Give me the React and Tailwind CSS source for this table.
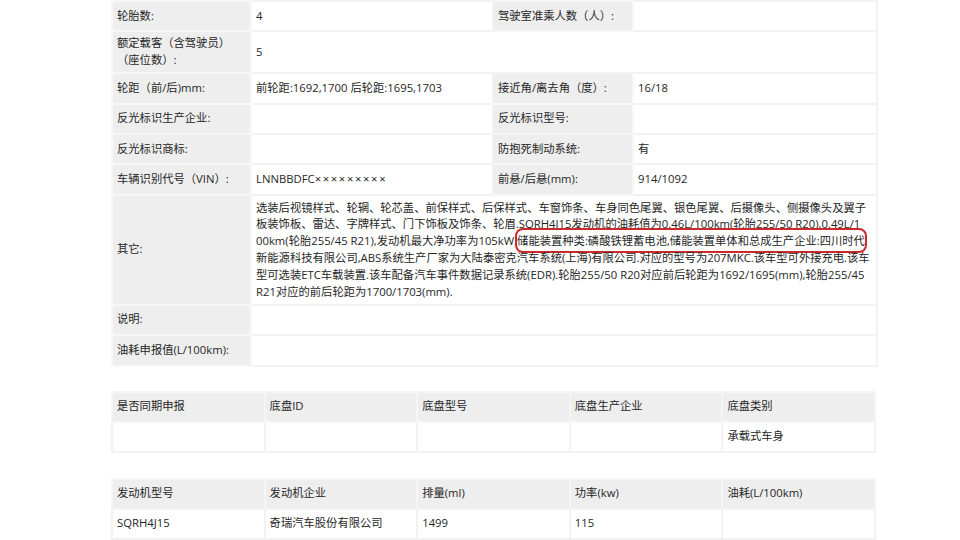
import React from 'react';

const font = { fontFamily: '"Open Sans", "Noto Sans CJK SC", sans-serif' };

const label = 'bg-[#eeeeee] border-2 border-[#f7f7f7] px-[4px] align-middle';
const value = 'bg-white border-2 border-[#f2f2f2] px-[4px] align-middle';

function Row({ h = 'h-[30.5px]', children }) {
  return <tr className={h}>{children}</tr>;
}

const otherLines = [
  '选装后视镜样式、轮辋、轮芯盖、前保样式、后保样式、车窗饰条、车身同色尾翼、银色尾翼、后摄像头、侧摄像头及翼子',
  '板装饰板、雷达、字牌样式、门下饰板及饰条、轮眉.SQRH4J15发动机的油耗值为0.46L/100km(轮胎255/50 R20),0.49L/1',
  null,
  '新能源科技有限公司,ABS系统生产厂家为大陆泰密克汽车系统(上海)有限公司.对应的型号为207MKC.该车型可外接充电.该车',
  '型可选装ETC车载装置.该车配备汽车事件数据记录系统(EDR).轮胎255/50 R20对应前后轮距为1692/1695(mm),轮胎255/45',
  'R21对应的前后轮距为1700/1703(mm).',
];

function SmallTable({ head, body }) {
  return (
    <table className="w-[765px] table-fixed border-collapse">
      <tbody>
        <tr className="h-[30px]">
          {head.map((t, i) => (
            <td key={i} className="bg-[#eeeeee] border-2 border-[#f5f5f5] px-[4px]">{t}</td>
          ))}
        </tr>
        <tr className="h-[30px]">
          {body.map((t, i) => (
            <td key={i} className="bg-white border-2 border-[#f2f2f2] px-[4px]">{t}</td>
          ))}
        </tr>
      </tbody>
    </table>
  );
}

export default function App() {
  return (
    <div className="w-[960px] h-[540px] overflow-hidden bg-white text-[#262626] text-[11.3px] leading-[16.8px]" style={font}>
      <div className="pl-[111px] flex flex-col">
        <table className="w-[765px] table-fixed border-collapse">
          <colgroup>
            <col className="w-[139px]" />
            <col className="w-[242px]" />
            <col className="w-[140px]" />
            <col className="w-[244px]" />
          </colgroup>
          <tbody>
            <Row h="h-[30px]">
              <td className={label}>轮胎数:</td>
              <td className={value}>4</td>
              <td className={label}>驾驶室准乘人数（人）:</td>
              <td className={value}></td>
            </Row>
            <Row h="h-[42px]">
              <td className={label}>额定载客（含驾驶员）<br />（座位数）:</td>
              <td className={value} colSpan={3}>5</td>
            </Row>
            <Row>
              <td className={label}>轮距（前/后)mm:</td>
              <td className={value}>前轮距:1692,1700 后轮距:1695,1703</td>
              <td className={label}>接近角/离去角（度）:</td>
              <td className={value}>16/18</td>
            </Row>
            <Row>
              <td className={label}>反光标识生产企业:</td>
              <td className={value}></td>
              <td className={label}>反光标识型号:</td>
              <td className={value}></td>
            </Row>
            <Row h="h-[30px]">
              <td className={label}>反光标识商标:</td>
              <td className={value}></td>
              <td className={label}>防抱死制动系统:</td>
              <td className={value}>有</td>
            </Row>
            <Row>
              <td className={label}>车辆识别代号（VIN）:</td>
              <td className={value}>
                LNNBBDFC<span className="tracking-[1.6px]">×××××××××</span>
              </td>
              <td className={label}>前悬/后悬(mm):</td>
              <td className={value}>914/1092</td>
            </Row>
            <Row h="h-[110px]">
              <td className={label}>其它:</td>
              <td className={`${value} pt-[2px] pb-[1px]`} colSpan={3}>
                {otherLines.map((l, i) =>
                  l ? (
                    <div key={i} className="whitespace-nowrap">{l}</div>
                  ) : (
                    <div key={i} className="whitespace-nowrap">
                      00km(轮胎255/45 R21),发动机最大净功率为105kW,
                      <span className="rounded-[6px] ring-2 ring-[#cc2a2a] py-[3px]">储能装置种类:磷酸铁锂蓄电池,储能装置单体和总成生产企业:四川时代</span>
                    </div>
                  )
                )}
              </td>
            </Row>
            <Row h="h-[30px]">
              <td className={label}>说明:</td>
              <td className={value} colSpan={3}></td>
            </Row>
            <Row h="h-[31px]">
              <td className={label}>油耗申报值(L/100km):</td>
              <td className={value} colSpan={3}></td>
            </Row>
          </tbody>
        </table>

        <div className="mt-[24px]">
          <SmallTable
            head={['是否同期申报', '底盘ID', '底盘型号', '底盘生产企业', '底盘类别']}
            body={['', '', '', '', '承载式车身']}
          />
        </div>

        <div className="mt-[25px]">
          <SmallTable
            head={['发动机型号', '发动机企业', '排量(ml)', '功率(kw)', '油耗(L/100km)']}
            body={['SQRH4J15', '奇瑞汽车股份有限公司', '1499', '115', '']}
          />
        </div>
      </div>
    </div>
  );
}
